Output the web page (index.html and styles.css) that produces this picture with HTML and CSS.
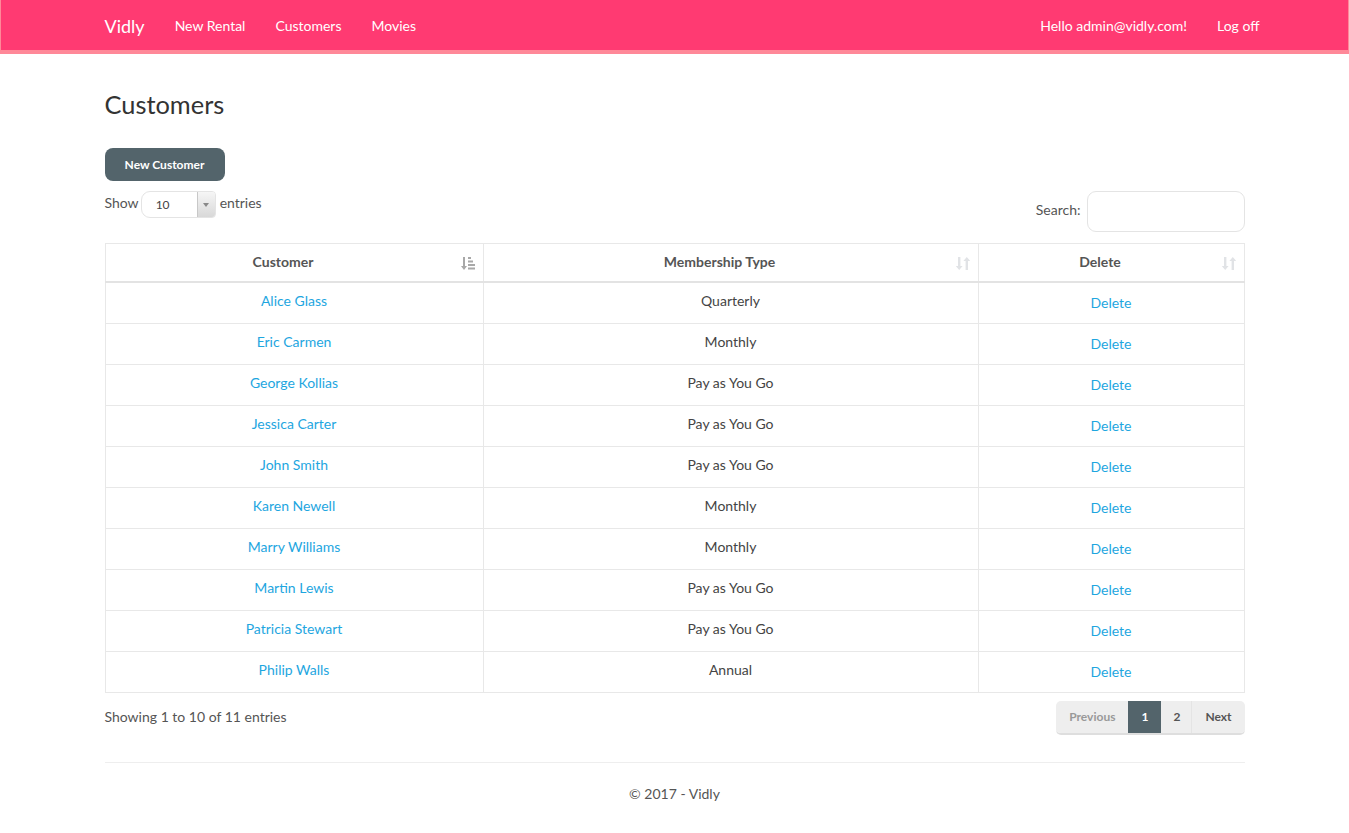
FILE: index.html
```html
<!DOCTYPE html>
<html>
<head>
<meta charset="utf-8">
<title>Customers - Vidly</title>
<link rel="stylesheet" href="styles.css">
</head>
<body>
<nav class="navbar">
  <div class="nav-inner">
    <div class="nav-left">
      <a class="brand" href="#">Vidly</a>
      <a class="nav-link" href="#">New Rental</a>
      <a class="nav-link" href="#">Customers</a>
      <a class="nav-link" href="#">Movies</a>
    </div>
    <div class="nav-right">
      <a class="nav-link" href="#">Hello admin@vidly.com!</a>
      <a class="nav-link" href="#">Log off</a>
    </div>
  </div>
</nav>
<main class="container">
  <h2 class="page-title">Customers</h2>
  <a class="btn" href="#">New Customer</a>
  <div class="dt-top">
    <div class="dt-length">
      <span>Show</span>
      <span class="select">
        <span class="select-value">10</span>
        <span class="select-arrow"><span class="tri"></span></span>
      </span>
      <span>entries</span>
    </div>
    <div class="dt-search">
      <span class="search-label">Search:</span>
      <span class="search-input"></span>
    </div>
  </div>
  <table class="table">
    <colgroup>
      <col class="c1"><col class="c2"><col class="c3">
    </colgroup>
    <thead>
      <tr>
        <th><span>Customer</span>
          <svg class="sort sort-active" width="14" height="13" viewBox="0 0 14 13"><path d="M2 0h2v9h2l-3 4-3-4h2z" fill="currentColor"/><rect x="7" y="0" width="3" height="2" fill="currentColor"/><rect x="7" y="3.5" width="5" height="2" fill="currentColor"/><rect x="7" y="7" width="7" height="2" fill="currentColor"/><rect x="7" y="10.5" width="7" height="2" fill="currentColor"/></svg>
        </th>
        <th><span>Membership Type</span>
          <svg class="sort" width="14" height="13" viewBox="0 0 14 13"><path d="M2 0h2.4v9h2.2l-3.4 4-3.4-4h2.2z" fill="currentColor"/><path d="M9.6 13h2.4v-9h2.2l-3.4-4-3.4 4h2.2z" fill="currentColor"/></svg>
        </th>
        <th><span>Delete</span>
          <svg class="sort" width="14" height="13" viewBox="0 0 14 13"><path d="M2 0h2.4v9h2.2l-3.4 4-3.4-4h2.2z" fill="currentColor"/><path d="M9.6 13h2.4v-9h2.2l-3.4-4-3.4 4h2.2z" fill="currentColor"/></svg>
        </th>
      </tr>
    </thead>
    <tbody>
      <tr><td><a href="#">Alice Glass</a></td><td>Quarterly</td><td><a class="del" href="#">Delete</a></td></tr>
      <tr><td><a href="#">Eric Carmen</a></td><td>Monthly</td><td><a class="del" href="#">Delete</a></td></tr>
      <tr><td><a href="#">George Kollias</a></td><td>Pay as You Go</td><td><a class="del" href="#">Delete</a></td></tr>
      <tr><td><a href="#">Jessica Carter</a></td><td>Pay as You Go</td><td><a class="del" href="#">Delete</a></td></tr>
      <tr><td><a href="#">John Smith</a></td><td>Pay as You Go</td><td><a class="del" href="#">Delete</a></td></tr>
      <tr><td><a href="#">Karen Newell</a></td><td>Monthly</td><td><a class="del" href="#">Delete</a></td></tr>
      <tr><td><a href="#">Marry Williams</a></td><td>Monthly</td><td><a class="del" href="#">Delete</a></td></tr>
      <tr><td><a href="#">Martin Lewis</a></td><td>Pay as You Go</td><td><a class="del" href="#">Delete</a></td></tr>
      <tr><td><a href="#">Patricia Stewart</a></td><td>Pay as You Go</td><td><a class="del" href="#">Delete</a></td></tr>
      <tr><td><a href="#">Philip Walls</a></td><td>Annual</td><td><a class="del" href="#">Delete</a></td></tr>
    </tbody>
  </table>
  <div class="dt-bottom">
    <div class="dt-info">Showing 1 to 10 of 11 entries</div>
    <ul class="pagination">
      <li class="disabled"><a href="#">Previous</a></li>
      <li class="active"><a href="#">1</a></li>
      <li class="after-active"><a href="#">2</a></li>
      <li class="next"><a href="#">Next</a></li>
    </ul>
  </div>
  <hr class="rule">
  <footer class="footer">© 2017 - Vidly</footer>
</main>
</body>
</html>
```

FILE: styles.css
```css
* { box-sizing: border-box; }
html, body { margin: 0; padding: 0; }
body {
  font-family: Lato, "Open Sans", "Liberation Sans", sans-serif;
  font-size: 14px;
  line-height: 20px;
  color: #555;
  background: #fff;
}
a { text-decoration: none; }

.navbar {
  background: #ff3a72;
  height: 54px;
  border-style: solid;
  border-color: #ff8898;
  border-width: 0 1px 4px 1px;
}
.nav-inner {
  width: 1170px;
  margin: 0 auto;
  display: flex;
  justify-content: space-between;
  height: 50px;
}
.nav-left, .nav-right { display: flex; align-items: stretch; }
.nav-right { margin-right: -15px; }
.brand {
  color: #fff;
  font-size: 18px;
  padding: 16px 15px 14px;
  line-height: 20px;
  height: 50px;
}
.nav-link {
  color: #fff;
  padding: 16px 15px 14px;
  line-height: 20px;
  font-size: 14px;
}

.container {
  width: 1170px;
  margin: 0 auto;
  padding: 36px 15px 0;
}
.page-title {
  margin: 0;
  font-size: 25.4px;
  line-height: 29px;
  font-weight: 400;
  color: #333;
}
.btn {
  display: inline-block;
  margin-top: 29px;
  background: #53646b;
  color: #fff;
  font-size: 12px;
  font-weight: 700;
  line-height: 17px;
  padding: 8px 0;
  border-radius: 8px;
  width: 120px;
  text-align: center;
}

.dt-top {
  display: flex;
  justify-content: space-between;
  align-items: flex-start;
  margin-top: 10px;
}
.dt-length {
  display: flex;
  align-items: center;
  gap: 3px;
  height: 27px;
}
.dt-length > span:first-child { margin-top: -4px; margin-right: -1px; }
.dt-length > span:last-child { margin-top: -4px; margin-left: 1px; }
.select {
  display: inline-flex;
  width: 75px;
  height: 27px;
  border: 1px solid #e4e4e4;
  border-radius: 9px 4px 4px 9px;
  overflow: hidden;
  background: #fff;
}
.select-value {
  flex: 1;
  font-size: 12px;
  color: #444;
  padding-left: 14px;
  line-height: 25px;
}
.select-arrow {
  width: 18px;
  border-left: 1px solid #c8c8c8;
  background: linear-gradient(#f6f6f6, #d8d8d8);
  display: flex;
  align-items: center;
  justify-content: center;
}
.tri {
  width: 0; height: 0;
  border-left: 3.5px solid transparent;
  border-right: 3.5px solid transparent;
  border-top: 4px solid #888;
}
.dt-search {
  display: flex;
  align-items: center;
  gap: 6px;
}
.search-label { margin-top: -4px; }
.search-input {
  display: block;
  width: 158px;
  height: 41px;
  border: 1px solid #e4e4e4;
  border-radius: 9px;
  background: #fff;
}

.table {
  width: 100%;
  border-collapse: collapse;
  margin-top: 11px;
  border: 1px solid #e8e8e8;
}
.c1 { width: 378px; }
.c2 { width: 495px; }
.c3 { width: 266px; }
.table th {
  position: relative;
  height: 38px;
  padding: 8px 30px 8px 8px;
  font-weight: 700;
  color: #555;
  text-align: center;
  border: 1px solid #e8e8e8;
  border-bottom: 2px solid #e3e3e3;
}
.table td {
  height: 41px;
  padding: 8px 10px 12px;
  text-align: center;
  border: 1px solid #e8e8e8;
  color: #444;
}
.table td a { color: #1ea6df; }
.table td a.del { position: relative; top: 2px; }
.sort {
  position: absolute;
  right: 8px;
  top: 13px;
  color: #e1e3e6;
}
.sort.sort-active { color: #a8a8a8; }

.dt-bottom {
  display: flex;
  justify-content: space-between;
  align-items: flex-start;
  margin-top: 9px;
}
.dt-info { padding-top: 5px; }
.pagination {
  list-style: none;
  display: flex;
  margin: -1px 0 0;
  padding: 0;
  border-radius: 5px;
  overflow: hidden;
  border-bottom: 2px solid #dedede;
}
.pagination li a {
  display: block;
  height: 32px;
  line-height: 32px;
  padding: 0 12px;
  background: #eee;
  color: #555;
  font-size: 12px;
  font-weight: 700;
  border-left: 1px solid #e4e4e4;
}
.pagination li:first-child a { border-left: 0; }
.pagination li.disabled a { color: #999; padding: 0 13px; }
.pagination li.active a { background: #53646b; color: #fff; border-left-color: #53646b; padding: 0 12px; }
.pagination li.after-active a { border-left-color: #53646b; padding: 0 11px 0 12px; }
.pagination li.next a { padding: 0 13px; }

.rule {
  border: 0;
  border-top: 1px solid #eee;
  margin: 27px 0 0;
}
.footer {
  text-align: center;
  padding-top: 21px;
  color: #555;
}
```
